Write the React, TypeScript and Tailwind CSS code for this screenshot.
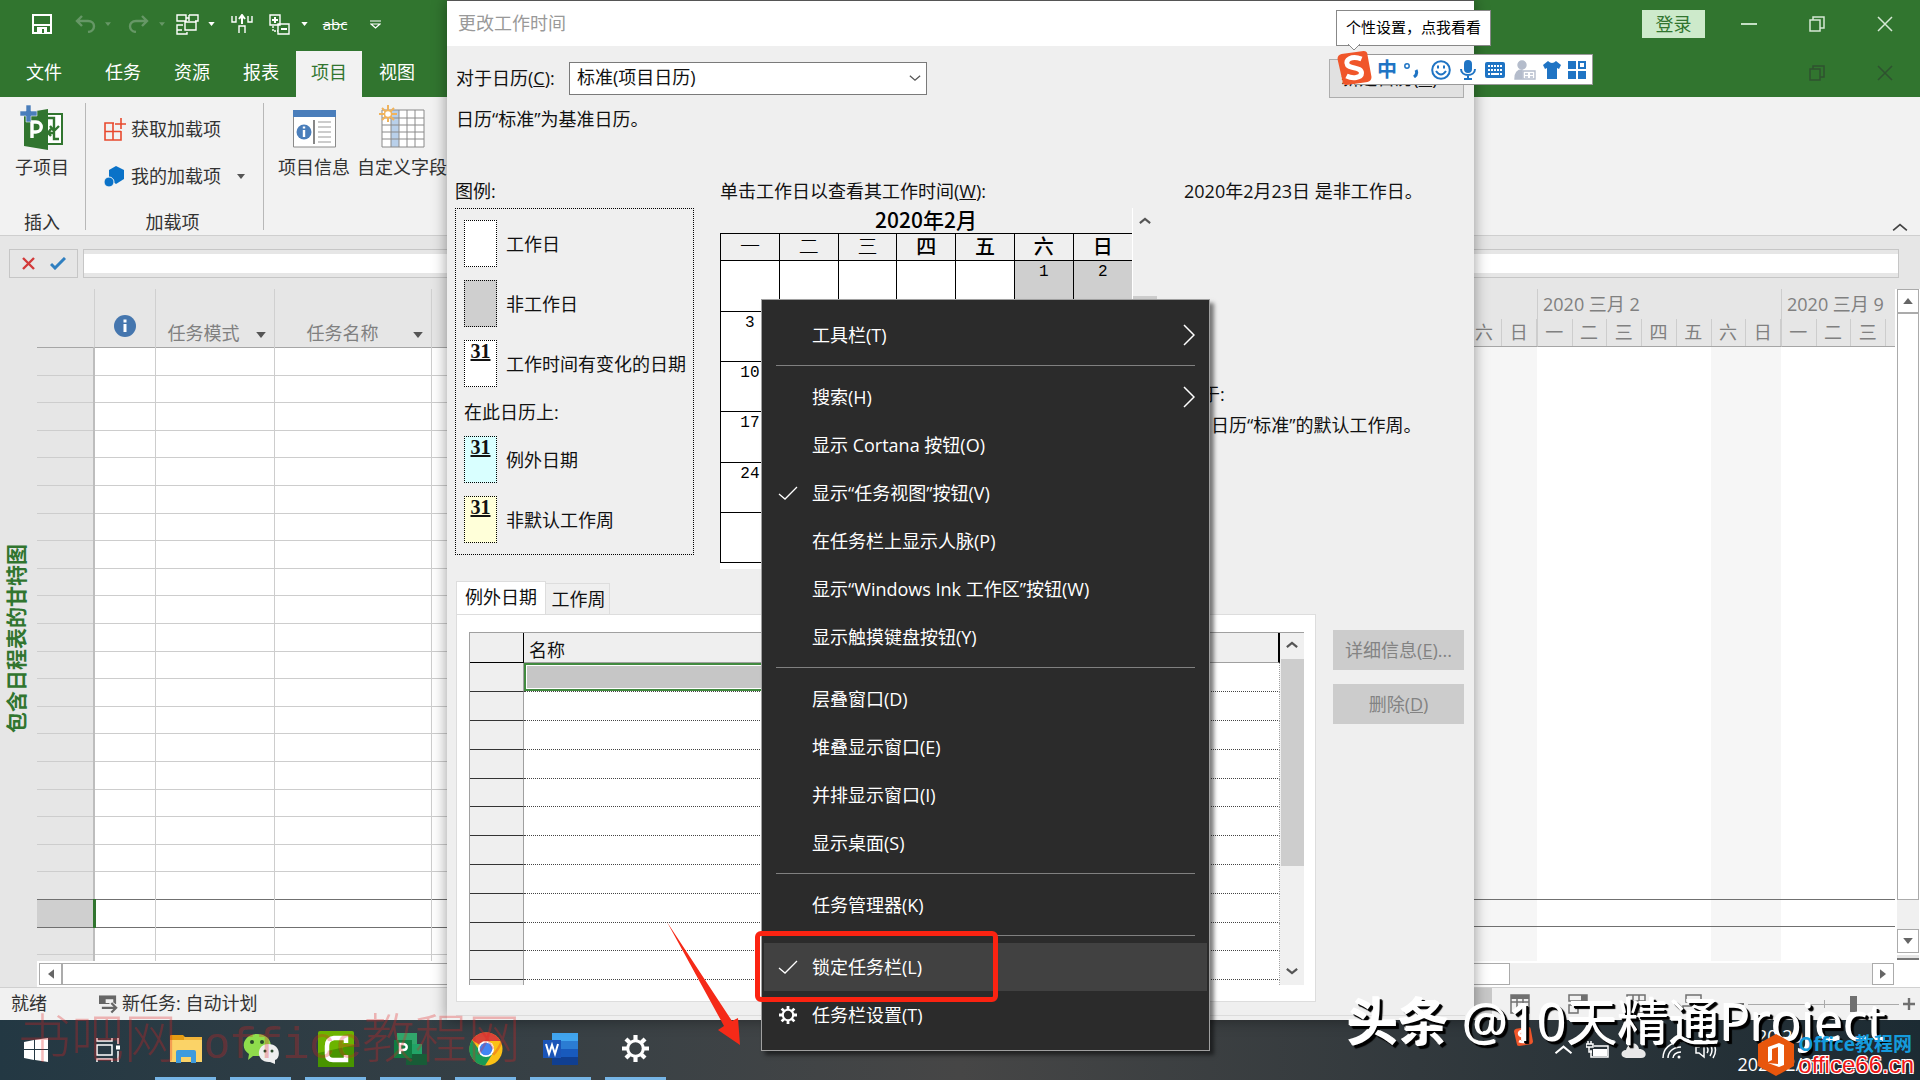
import React from 'react';
import type { ReactNode } from 'react';

const WEEK = ['一', '二', '三', '四', '五', '六', '日'];

const Caret = ({ className = '' }: { className?: string }) => (
  <svg viewBox="0 0 8 5" className={className}>
    <path d="M0 0h8L4 5z" fill="currentColor" />
  </svg>
);

const Chevron = ({ className = '', d = 'M1 7l6-5 6 5', w = 1.5 }: { className?: string; d?: string; w?: number }) => (
  <svg viewBox="0 0 14 9" className={className} fill="none" stroke="currentColor" strokeWidth={w}>
    <path d={d} />
  </svg>
);

/* ---------- Barra de título e abas ---------- */

const QuickAccess = () => (
  <div className="flex items-center pl-8 text-white">
    <button aria-label="保存">
      <svg viewBox="0 0 20 20" className="w-5 h-5" fill="none" stroke="#fff" strokeWidth="2">
        <path d="M1 1h18v18H1z" />
        <path d="M1 11h18" />
        <path d="M5 19v-6h10v6z" fill="#fff" stroke="none" />
        <path d="M10 15h2v4h-2z" fill="#31752f" stroke="none" />
      </svg>
    </button>
    <button aria-label="撤消" className="ml-[23px]">
      <svg viewBox="0 0 21 18" className="w-[21px] h-[18px]" fill="none" stroke="#669766" strokeWidth="2.4">
        <path d="M7 1L2 6l5 5M2 6h11c8 0 8 10 0 11" />
      </svg>
    </button>
    <Caret className="w-[6px] h-1 ml-[9px] text-[#669766]" />
    <button aria-label="恢复" className="ml-[17px]">
      <svg viewBox="0 0 21 18" className="w-[21px] h-[18px]" fill="none" stroke="#669766" strokeWidth="2.4">
        <path d="M14 1l5 5-5 5M19 6H8c-8 0-8 10 0 11" />
      </svg>
    </button>
    <Caret className="w-[6px] h-1 ml-[10px] text-[#669766]" />
    <button aria-label="网络图" className="ml-[11px]">
      <svg viewBox="0 0 23 21" className="w-[23px] h-[21px]" fill="none" stroke="#fff" strokeWidth="1.4">
        <path d="M1 1h9v6H1zM13 1h9v6h-3M13 1v6M9 8h11v8H9zM7 11H1v9h10v-2M1 16h5M10 4h3" />
      </svg>
    </button>
    <Caret className="w-[7px] h-1 ml-[9px]" />
    <button aria-label="上移" className="ml-[16px]">
      <svg viewBox="0 0 22 20" className="w-[22px] h-5" fill="none" stroke="#fff" strokeWidth="1.4">
        <path d="M1 2v6h4V2M17 2v6h4V2M8 19v-7h6v7" />
        <path d="M11 10V2M8 5l3-4 3 4" strokeWidth="2" />
      </svg>
    </button>
    <button aria-label="大纲" className="ml-[16px]">
      <svg viewBox="0 0 21 21" className="w-[21px] h-[21px]" fill="none" stroke="#fff" strokeWidth="1.4">
        <path d="M1 1h10v10H1zM9 10h11v10H9z" />
        <path d="M3 6h6M6 3v6M12 15h6" strokeWidth="2" />
        <path d="M4 12v5h5" strokeDasharray="2 1" />
      </svg>
    </button>
    <Caret className="w-[7px] h-1 ml-[11px]" />
    <button aria-label="删除线" className="ml-[14px] w-[26px] text-[15px] leading-5 line-through">abc</button>
    <svg viewBox="0 0 11 9" className="w-[11px] h-[9px] ml-[22px]" fill="none" stroke="#fff" strokeWidth="1.2">
      <path d="M0 1h11M1 4h9L5.500 8z" />
    </svg>
  </div>
);

const Restore = () => (
  <svg viewBox="0 0 16 16" className="w-4 h-4" fill="none" stroke="currentColor" strokeWidth="1.5">
    <path d="M1 4h10v11H1zM4 4V1h11v11h-4" />
  </svg>
);

const Close = () => (
  <svg viewBox="0 0 16 16" className="w-4 h-4" fill="none" stroke="currentColor" strokeWidth="1.5">
    <path d="M1 1l14 14M15 1L1 15" />
  </svg>
);

const TitleBar = () => (
  <header className="bg-[#31752f] text-white shrink-0">
    <div className="flex justify-between h-12">
      <QuickAccess />
      <div className="flex items-center">
        <button className="w-[63px] h-7 mr-[10px] bg-[#cdeacb] text-[#31752f] text-[18px] leading-7">登录</button>
        <button aria-label="最小化" className="w-[68px] flex justify-center">
          <span className="w-4 h-[2px] bg-[#c5e0c5]"></span>
        </button>
        <button aria-label="还原" className="w-[68px] flex justify-center text-[#d5e8d5]"><Restore /></button>
        <button aria-label="关闭" className="w-[68px] mr-px flex justify-center text-[#d5e8d5]"><Close /></button>
      </div>
    </div>
    <div className="flex justify-between h-[49px]">
      <nav className="flex items-end text-[18px]">
        <button className="w-[88px] h-[46px] pb-1">文件</button>
        <button className="w-[70px] h-[46px] pb-1">任务</button>
        <button className="w-[68px] h-[46px] pb-1">资源</button>
        <button className="w-[70px] h-[46px] pb-1">报表</button>
        <button className="w-[66px] h-[46px] pb-1 bg-[#f2f2f2] text-[#31752f]">项目</button>
        <button className="w-[70px] h-[46px] pb-1">视图</button>
      </nav>
      <div className="flex items-center text-[#2f5230]">
        <button aria-label="还原文档" className="w-[68px] flex justify-center"><Restore /></button>
        <button aria-label="关闭文档" className="w-[68px] mr-px flex justify-center"><Close /></button>
      </div>
    </div>
  </header>
);

/* ---------- Faixa de opções ---------- */

const Ribbon = () => (
  <div className="relative flex h-[139px] shrink-0 bg-[#f2f2f2] border-b border-[#cfcfcf] text-[18px] text-[#333]">
    <div className="flex flex-col items-center w-[85px] pt-2 pr-px">
      <button className="flex flex-col items-center">
        <svg viewBox="0 0 44 45" className="w-11 h-[45px]">
          <path d="M24 9h18v30H24z" fill="#fff" stroke="#31752f" strokeWidth="2" />
          <path d="M27 13h7v12M30 21l4 5 5-5M28 28h6v6h5M31 31l-3-3 3-4" fill="none" stroke="#31752f" strokeWidth="2.400" />
          <path d="M4 8l24-4v41L4 41z" fill="#31752f" />
          <path d="M12 33V17h4c7 0 7 10 0 10h-4" fill="none" stroke="#fff" strokeWidth="3.400" />
          <path d="M6 0h5v6h6v5h-6v6H6v-6H0V6h6z" fill="#4a7ebb" stroke="#f2f2f2" strokeWidth=".6" />
        </svg>
        <span className="leading-[34px]">子项目</span>
      </button>
      <span className="mt-auto leading-[26px]">插入</span>
    </div>
    <div className="w-px h-[127px] mt-[6px] bg-[#b8b8b8]"></div>
    <div className="flex flex-col w-[177px] pt-[9px]">
      <button className="flex items-center h-[47px] pl-[18px] gap-[5px]">
        <svg viewBox="0 0 22 23" className="w-[22px] h-[23px]" fill="none" stroke="#e8492e" strokeWidth="1.6">
          <path d="M10 5H1v17h16v-9M1 13.500h16M9 5v17M17 0v11M11 6h11" />
        </svg>
        获取加载项
      </button>
      <button className="flex items-center h-[47px] pl-[18px] gap-[5px]">
        <svg viewBox="0 0 22 22" className="w-[22px] h-[22px]" fill="#0a72c8">
          <path d="M12 0l8 4v9l-8 5-7-5V4z" />
          <circle cx="5" cy="16" r="5" stroke="#f2f2f2" />
        </svg>
        我的加载项
        <Caret className="w-2 h-[5px] ml-[11px] text-[#555]" />
      </button>
      <span className="mt-auto leading-[26px] text-center pr-1">加载项</span>
    </div>
    <div className="w-px h-[127px] mt-[6px] bg-[#b8b8b8]"></div>
    <div className="flex items-start pt-2 pl-[14px] gap-[7px]">
      <button className="flex flex-col items-center">
        <svg viewBox="0 0 43 45" className="w-[43px] h-[45px]">
          <path d="M.5 6h42v36H.5z" fill="#fff" stroke="#8a8a8a" />
          <path d="M0 5h43v7H0z" fill="#4a7ebb" />
          <circle cx="11" cy="27" r="7.500" fill="#4a7ebb" />
          <path d="M11 25v7M11 21.500v2" stroke="#fff" strokeWidth="2.400" />
          <path d="M21 15v24" stroke="#555" strokeWidth="1.400" />
          <path d="M25 17h13M25 22h13M25 27h13M25 32h13M25 37h13" stroke="#999" />
        </svg>
        <span className="leading-[34px]">项目信息</span>
      </button>
      <button className="flex flex-col items-center">
        <svg viewBox="0 0 46 45" className="w-[46px] h-[45px]">
          <path d="M3 5h42v37H3z" fill="#fff" />
          <path d="M12 5h8v37h-8z" fill="#b9d0ea" />
          <path d="M3 5h42v37H3zM3 13h42M3 20h42M3 27h42M3 34h42M12 5v37M20 5v37M28 5v37M36 5v37" fill="none" stroke="#8a8a8a" />
          <path d="M9 0v17M0 9h18M3 3l12 12M15 3L3 15" stroke="#f0b35c" strokeWidth="2" />
          <circle cx="9" cy="9" r="3.500" fill="#fff" stroke="#f0b35c" strokeWidth="1.500" />
        </svg>
        <span className="leading-[34px]">自定义字段</span>
      </button>
    </div>
    <button aria-label="折叠功能区" className="ml-auto self-end mb-[2px] mr-3 text-[#444]">
      <Chevron className="w-4 h-[11px]" />
    </button>
  </div>
);

const EntryBar = () => (
  <div className="flex h-[53px] shrink-0 pt-[13px] pl-[9px] pr-[21px] gap-[5px]">
    <div className="flex items-center w-[69px] h-[29px] border border-[#c6c6c6] pl-3 gap-[15px]">
      <button aria-label="取消">
        <svg viewBox="0 0 13 13" className="w-[13px] h-[13px]" stroke="#d23a3a" strokeWidth="2.400">
          <path d="M1 1l11 11M12 1L1 12" />
        </svg>
      </button>
      <button aria-label="输入">
        <svg viewBox="0 0 16 13" className="w-4 h-[13px]" fill="none" stroke="#2f7fc0" strokeWidth="3">
          <path d="M1 7l4 4L15 1" />
        </svg>
      </button>
    </div>
    <div className="flex flex-1 h-[29px] py-1 border border-[#c6c6c6]">
      <input aria-label="输入栏" className="flex-1 min-w-0 bg-white" />
    </div>
  </div>
);

/* ---------- Tabela de tarefas e gráfico ---------- */

const TaskTable = () => (
  <div className="flex-1 min-w-0 h-[672px] overflow-hidden">
    <table className="w-full table-fixed border-collapse text-[18px] text-[#808080]">
      <colgroup>
        <col className="w-[57px]" />
        <col className="w-[61px]" />
        <col className="w-[119px]" />
        <col className="w-[157px]" />
        <col />
      </colgroup>
      <thead>
        <tr className="h-[58px] border-b border-[#a6a6a6]">
          <th className="border-r border-[#d0d0d0]"></th>
          <th className="border-r border-[#d0d0d0]">
            <svg viewBox="0 0 22 22" className="w-[22px] h-[22px] mx-auto mt-4" aria-label="标记">
              <circle cx="11" cy="11" r="11" fill="#4576ae" />
              <path d="M11 9v8M11 4.500v3" stroke="#fff" strokeWidth="3" />
            </svg>
          </th>
          <th className="border-r border-[#d0d0d0] font-normal align-bottom">
            <div className="flex items-center justify-between pl-3 pr-2 leading-7">任务模式<Caret className="w-[10px] h-[6px] mt-1 text-[#555]" /></div>
          </th>
          <th className="border-r border-[#d0d0d0] font-normal align-bottom">
            <div className="flex items-center justify-between pl-8 pr-2 leading-7">任务名称<Caret className="w-[10px] h-[6px] mt-1 text-[#555]" /></div>
          </th>
          <th></th>
        </tr>
      </thead>
      <tbody>
        {Array.from({ length: 23 }, (_, i) => (
          <tr
            key={i}
            className={`border-b ${i % 5 === 1 || i % 5 === 3 ? 'h-[27px]' : 'h-[28px]'} ${i === 19 || i === 20 ? 'border-[#707070]' : 'border-[#cdcdcd]'}`}
          >
            <td className={i === 20 ? 'bg-[#cfcfcf] border-r-3 border-[#31752f]' : 'bg-[#e6e6e6] border-r-2 border-[#bdbdbd]'}></td>
            <td className="bg-white border-r border-r-[#cdcdcd]"></td>
            <td className="bg-white border-r border-r-[#cdcdcd]"></td>
            <td className="bg-white border-r border-r-[#cdcdcd]"></td>
            <td className="bg-white"></td>
          </tr>
        ))}
      </tbody>
    </table>
  </div>
);

const WEEKS = [
  { label: '2020 二月 24', days: WEEK },
  { label: '2020 三月 2', days: WEEK },
  { label: '2020 三月 9', days: WEEK.slice(0, 3) },
];

const Gantt = () => (
  <div className="w-[602px] shrink-0 h-[672px] overflow-hidden text-[18px] text-[#808080]">
    <div className="flex h-full">
      {WEEKS.map((week) => (
        <div key={week.label} className="w-[244px] shrink-0 flex flex-col">
          <div className="h-[58px] border-b border-[#a6a6a6] border-l border-l-[#cdcdcd]">
            <div className="h-[30px] leading-[30px] pl-[5px]">{week.label}</div>
            <div className="grid grid-cols-7 h-[27px]">
              {week.days.map((d) => (
                <span key={d} className="text-center leading-[26px] pr-px border-r border-[#cdcdcd]">{d}</span>
              ))}
            </div>
          </div>
          <div className="grid grid-cols-7 flex-1 bg-white">
            <div className="col-start-6 col-span-2 bg-[#f6f6f6]"></div>
          </div>
        </div>
      ))}
    </div>
    {/* linha selecionada */}
    <div className="relative -top-[62px] h-7 border-y border-[#707070]"></div>
  </div>
);

const VerticalScroll = () => (
  <div className="flex flex-col w-[25px] shrink-0 pl-[2px] pr-px bg-white text-[#666]">
    <button aria-label="向上" className="flex items-center justify-center h-6 border border-[#ababab]"><Caret className="w-[10px] h-[6px] rotate-180" /></button>
    <div className="h-[587px] border border-[#ababab]"></div>
    <div className="h-[29px] bg-[#f0f0f0]"></div>
    <button aria-label="向下" className="flex items-center justify-center h-6 border border-[#ababab]"><Caret className="w-[10px] h-[6px]" /></button>
    <div className="h-[5px] mt-[2px] bg-[#e6e6e6] border-b-2 border-[#777]"></div>
  </div>
);

const Workspace = () => (
  <div className="flex flex-1 min-h-0">
    <div className="flex items-center justify-center w-[31px] mr-[6px] shrink-0">
      <span className="[writing-mode:vertical-rl] [text-orientation:sideways] rotate-180 text-[21px] leading-7 font-bold text-[#31752f] whitespace-nowrap">包含日程表的甘特图</span>
    </div>
    <div className="flex flex-col flex-1 min-w-0">
      <div className="flex flex-1">
        <TaskTable />
        <Gantt />
        <VerticalScroll />
      </div>
      <div className="flex h-[26px] shrink-0 pt-[2px] pb-[2px] pl-[2px] pr-[26px] bg-white text-[#666]">
        <button aria-label="向左" className="flex items-center justify-center w-[23px] border border-[#ababab]"><Caret className="w-[10px] h-[6px] rotate-90" /></button>
        <div className="flex-1 border border-[#ababab]"></div>
        <div className="w-[362px] bg-[#f0f0f0]"></div>
        <button aria-label="向右" className="flex items-center justify-center w-[22px] border border-[#ababab]"><Caret className="w-[10px] h-[6px] -rotate-90" /></button>
      </div>
    </div>
  </div>
);

const StatusBar = () => (
  <footer className="flex items-center h-[33px] shrink-0 bg-[#f1f1f1] border-t border-[#d0d0d0] text-[18px] leading-7 text-[#333]">
    <span className="pl-[11px] pb-[2px]">就绪</span>
    <svg viewBox="0 0 20 20" className="w-[19px] h-5 ml-[52px] mr-1" fill="none">
      <path d="M0 1h18v9H0z" fill="#666" />
      <path d="M7 7h6v7h5M14 10l5 4-5 5M3 14h6" stroke="#f1f1f1" strokeWidth="4" />
      <path d="M3 14h14M13 9l5 5-5 5" stroke="#666" strokeWidth="2.400" />
    </svg>
    <span className="pb-[2px]">新任务: 自动计划</span>
    <div className="flex items-center ml-auto h-full pr-[5px] text-[#707070]">
      <button aria-label="甘特图" className="w-[22px] h-full mr-[18px] bg-[#c8c8c8]"></button>
      <svg viewBox="0 0 20 20" className="w-5 h-5 mr-[38px]" fill="none" stroke="currentColor" strokeWidth="1.500">
        <path d="M1 1h18v18H1zM1 8h18M7 5v14M13 5v14" /><path d="M1 3h18" strokeWidth="4" />
      </svg>
      <svg viewBox="0 0 20 20" className="w-5 h-5 mr-[38px]" fill="none" stroke="currentColor" strokeWidth="1.500">
        <path d="M1 1h18v6H1zM1 11h9v8H1z" /><path d="M13 4h6" strokeWidth="6" />
      </svg>
      <svg viewBox="0 0 20 20" className="w-5 h-5 mr-[36px]" fill="none" stroke="currentColor" strokeWidth="1.500">
        <path d="M1 1h18v18H1zM1 7h18M1 13h18M7 1v18M13 1v18" />
      </svg>
      <svg viewBox="0 0 20 20" className="w-5 h-5 mr-[26px]" fill="none" stroke="currentColor" strokeWidth="1.500">
        <path d="M4 1h15v7H4zM1 12h14v7H1z" />
      </svg>
      <span className="w-4 h-[2px] bg-current"></span>
      <div className="flex items-center w-[151px] mx-1">
        <span className="flex-1 h-px bg-[#aaa]"></span>
        <span className="w-px h-2 bg-[#aaa]"></span>
        <span className="w-[25px] h-px bg-[#aaa]"></span>
        <span className="w-[7px] h-4 bg-[#707070]"></span>
        <span className="w-[42px] h-px bg-[#aaa]"></span>
      </div>
      <svg viewBox="0 0 12 12" className="w-3 h-3" stroke="currentColor" strokeWidth="2.400">
        <path d="M0 6h12M6 0v12" />
      </svg>
    </div>
  </footer>
);

/* ---------- Diálogo de calendário ---------- */

const Swatch = ({ color, day, label }: { color: string; day?: boolean; label: string }) => (
  <div className="flex items-center h-[47px] gap-[9px]">
    <span className={`w-[33px] h-full border border-dotted border-black text-center text-[20px] leading-[21px] font-bold underline font-['Liberation_Serif',serif] ${color}`}>
      {day ? '31' : ''}
    </span>
    <span className="pt-[2px]">{label}</span>
  </div>
);

const Legend = () => (
  <div className="w-[239px]">
    <div className="h-[34px] leading-[34px]">图例:</div>
    <div className="flex flex-col h-[347px] pt-[11px] pl-2 border border-dotted border-black whitespace-nowrap">
      <Swatch color="bg-white" label="工作日" />
      <div className="h-[13px]"></div>
      <Swatch color="bg-[#cfcfcf]" label="非工作日" />
      <div className="h-[13px]"></div>
      <Swatch color="bg-white" day label="工作时间有变化的日期" />
      <div className="h-[49px] leading-[51px]">在此日历上:</div>
      <Swatch color="bg-[#d9ffff]" day label="例外日期" />
      <div className="h-[13px]"></div>
      <Swatch color="bg-[#ffffd9]" day label="非默认工作周" />
    </div>
  </div>
);

const Calendar = () => (
  <div className="ml-[26px]">
    <div className="h-[34px] leading-[34px]">单击工作日以查看其工作时间(<u>W</u>):</div>
    <div className="flex">
      <div className="w-[413px] border-r border-white">
        <table className="w-[412px] table-fixed border-collapse text-black">
          <caption className="h-[25px] text-[21px] leading-[22px] font-medium font-['Noto_Sans_CJK_SC',sans-serif]">2020年2月</caption>
          <thead>
            <tr className="h-[27px] border-y border-black">
              {WEEK.map((d, i) => (
                <th key={d} className={`border-l border-black text-[20px] leading-6 ${i < 3 ? 'font-light' : 'font-medium'}`}>{d}</th>
              ))}
            </tr>
          </thead>
          <tbody>
            {Array.from({ length: 6 }, (_, row) => (
              <tr key={row} className={`border-b border-black ${row % 3 === 0 ? 'h-[51px]' : 'h-[50px]'}`}>
                {WEEK.map((d, col) => {
                  const n = row * 7 + col - 4;
                  return (
                    <td
                      key={d}
                      className={`border-l border-black align-top text-center text-[16px] leading-[22px] font-['Liberation_Mono',monospace] ${col > 4 && n <= 29 ? 'bg-[#cfcfcf]' : 'bg-white'}`}
                    >
                      {n > 0 && n <= 29 ? n : ''}
                    </td>
                  );
                })}
              </tr>
            ))}
          </tbody>
        </table>
        <div className="h-[6px] bg-white"></div>
      </div>
      <div className="w-6 pt-[9px] text-[#555]">
        <Chevron className="w-3 h-2 mx-auto" w={2.4} />
        <div className="h-[71px]"></div>
        <div className="h-[180px] bg-[#cdcdcd]"></div>
      </div>
    </div>
  </div>
);

const ExceptionPane = () => (
  <div className="flex-1 flex flex-col">
    <div className="flex items-end h-[33px]">
      <button className="w-[90px] h-[33px] bg-white border border-b-0 border-[#ddd] pb-[2px]">例外日期</button>
      <button className="w-[64px] h-[31px] border border-l-0 border-b-0 border-[#ddd] pl-[2px]">工作周</button>
    </div>
    <div className="flex h-[388px] pt-[17px] pl-3 pr-[11px] bg-white border border-[#ddd]">
      <div className="flex-1 h-[353px] overflow-hidden border-t border-l border-[#a0a0a0]">
        <table className="w-full table-fixed border-separate border-spacing-0">
          <colgroup>
            <col className="w-[54px]" />
            <col />
          </colgroup>
          <thead>
            <tr className="h-[30px] bg-[#efefef]">
              <th className="border-r border-b border-black"></th>
              <th className="border-r-2 border-b border-r-black border-b-[#a0a0a0] text-left pl-[5px] pt-1 font-normal leading-6">名称</th>
            </tr>
          </thead>
          <tbody>
            {Array.from({ length: 12 }, (_, i) => (
              <tr key={i} className={i % 5 === 4 ? 'h-[28px]' : 'h-[29px]'}>
                <td className="bg-[#efefef] border-b border-b-[#333] border-r border-r-[#a0a0a0]"></td>
                <td className="p-0 border-b border-dotted border-b-[#444] border-r border-r-[#a0a0a0]">
                  {i === 0 && <div className="h-[28px] w-[480px] bg-[#c6c6c6] border-2 border-[#418a3f] outline-1 -outline-offset-3 outline-white"></div>}
                </td>
              </tr>
            ))}
          </tbody>
        </table>
      </div>
      <div className="flex flex-col items-center w-6 h-[353px] bg-[#f0f0f0] border-t border-[#a0a0a0] text-[#555]">
        <Chevron className="w-3 h-2 mt-2 mb-[10px]" w={2.6} />
        <div className="w-[23px] h-[207px] bg-[#cdcdcd]"></div>
        <Chevron className="w-3 h-2 mt-auto mb-[10px] rotate-180" w={2.6} />
      </div>
    </div>
  </div>
);

const CalendarDialog = () => (
  <section className="absolute left-[447px] top-0 w-[1027px] h-[1020px] flex flex-col bg-[#efefef] border-t border-[#555] text-[18px] text-[#111] shadow-[0_0_14px_rgba(0,0,0,0.4)]">
    <h1 className="h-[45px] leading-[44px] pl-[11px] bg-white text-[#999]">更改工作时间</h1>
    <div className="flex items-center h-[39px] mt-[13px] pl-[9px] pr-[10px]">
      <label htmlFor="cal" className="w-[113px]">对于日历(<u>C</u>):</label>
      <div className="relative">
        <select id="cal" className="appearance-none w-[358px] h-[33px] px-[7px] pb-[2px] bg-white border border-[#7a7a7a]">
          <option>标准(项目日历)</option>
        </select>
        <Chevron className="absolute right-[6px] top-3 w-3 h-2 rotate-180 text-[#555]" />
      </div>
      <button className="ml-auto w-[135px] h-[39px] bg-[#e1e1e1] border border-[#adadad]">新建日历(<u>N</u>)...</button>
    </div>
    <p className="h-[42px] leading-[42px] pl-[9px]">日历“标准”为基准日历。</p>
    <div className="flex mt-[34px] pl-[8px]">
      <Legend />
      <Calendar />
      <div className="ml-[27px]">
        <p className="leading-[34px]">2020年2月23日 是非工作日。</p>
        <p className="mt-[171px] leading-[31px]">基于:</p>
        <p className="pl-[27px] leading-[31px]">日历“标准”的默认工作周。</p>
      </div>
    </div>
    <div className="flex mt-3 pl-[9px] pr-[10px] gap-[17px]">
      <ExceptionPane />
      <div className="flex flex-col gap-[14px] mt-[49px]">
        <button disabled className="w-[131px] h-10 bg-[#cccccc] text-[#838383]">详细信息(<u>E</u>)...</button>
        <button disabled className="w-[131px] h-10 bg-[#cccccc] text-[#838383]">删除(<u>D</u>)</button>
      </div>
    </div>
    <div className="mt-[13px] mx-[9px] h-px bg-[#dcdcdc]"></div>
  </section>
);

/* ---------- Menu da barra de tarefas ---------- */

const Gear = ({ className = '' }: { className?: string }) => (
  <svg viewBox="0 0 26 26" className={className} fill="none" stroke="#fff">
    <circle cx="13" cy="13" r="7.500" strokeWidth="3" />
    <path d="M13 0v5M13 21v5M0 13h5M21 13h5M3.800 3.800l3.500 3.500M18.700 18.700l3.500 3.500M22.200 3.800l-3.500 3.500M7.300 18.700l-3.500 3.500" strokeWidth="4" />
  </svg>
);

const Item = ({ icon, arrow, active, children }: { icon?: 'check' | 'gear'; arrow?: boolean; active?: boolean; children: ReactNode }) => (
  <button role="menuitem" className={`flex items-center h-12 mx-[2px] pl-[14px] pr-3 text-left ${active ? 'bg-[#414141]' : ''}`}>
    <span className="w-[34px]">
      {icon === 'check' && (
        <svg viewBox="0 0 20 14" className="w-5 h-[14px]" fill="none" stroke="#fff" strokeWidth="1.300">
          <path d="M1 8l6 5L19 1" />
        </svg>
      )}
      {icon === 'gear' && <Gear className="w-[18px] h-[18px] ml-px" />}
    </span>
    {children}
    {arrow && (
      <svg viewBox="0 0 12 22" className="w-3 h-[22px] ml-auto" fill="none" stroke="#fff" strokeWidth="1.500">
        <path d="M1 1l10 10L1 21" />
      </svg>
    )}
  </button>
);

const Sep = () => (
  <div className="flex h-[14px] pt-[6px] px-[14px]">
    <span className="flex-1 h-px bg-[#808080]"></span>
  </div>
);

const TaskbarMenu = () => (
  <div role="menu" className="absolute left-[761px] top-[299px] w-[449px] h-[752px] flex flex-col pt-[11px] bg-[#2b2b2b] border border-[#a0a0a0] text-white text-[18px] shadow-[4px_4px_4px_rgba(0,0,0,0.5)]">
    <Item arrow>工具栏(T)</Item>
    <Sep />
    <Item arrow>搜索(H)</Item>
    <Item>显示 Cortana 按钮(O)</Item>
    <Item icon="check">显示“任务视图”按钮(V)</Item>
    <Item>在任务栏上显示人脉(P)</Item>
    <Item>显示“Windows Ink 工作区”按钮(W)</Item>
    <Item>显示触摸键盘按钮(Y)</Item>
    <Sep />
    <Item>层叠窗口(D)</Item>
    <Item>堆叠显示窗口(E)</Item>
    <Item>并排显示窗口(I)</Item>
    <Item>显示桌面(S)</Item>
    <Sep />
    <Item>任务管理器(K)</Item>
    <Sep />
    <Item icon="check" active>锁定任务栏(L)</Item>
    <Item icon="gear">任务栏设置(T)</Item>
  </div>
);

/* ---------- Barra do método de entrada ---------- */

const SogouLogo = ({ className = '' }: { className?: string }) => (
  <svg viewBox="0 0 34 34" className={className}>
    <path d="M4 3L26 0q4 0 4 4l4 22q0 4-4 5L9 34q-4 0-4-4L0 8q0-4 4-5z" fill="#f0562a" />
    <path d="M24 8C14 4 7 9 10 14c3 4 14 2 14 8 0 5-9 6-15 3" fill="none" stroke="#fff" strokeWidth="5" />
  </svg>
);

const InputMethod = () => (
  <>
    <div className="absolute left-[1336px] top-[10px] w-[155px] h-9 pl-[9px] leading-8 bg-white border border-[#888] text-[15px] text-black whitespace-nowrap">
      个性设置，点我看看
      <svg viewBox="0 0 12 7" className="absolute left-[11px] top-[33px] w-3 h-[7px]">
        <path d="M0 0l6 6 6-6" fill="#fff" stroke="#888" />
      </svg>
    </div>
    <div className="absolute left-[1354px] top-[54px] w-[239px] h-[31px] flex items-center pl-[22px] gap-[7px] bg-white border border-[#999] text-[#1f74c4]">
      <span className="w-5 text-[20px] leading-6 font-bold">中</span>
      <svg viewBox="0 0 15 16" className="w-[15px] h-4 mr-[5px]" fill="none" stroke="currentColor">
        <circle cx="3" cy="4" r="2.200" strokeWidth="1.500" />
        <path d="M12 8q2 4-2 7" strokeWidth="3" />
      </svg>
      <svg viewBox="0 0 20 20" className="w-5 h-5" fill="none" stroke="currentColor" strokeWidth="2">
        <circle cx="10" cy="10" r="8.800" /><path d="M5 11q5 7 10 0M7 5.500v3M13 5.500v3" />
      </svg>
      <svg viewBox="0 0 20 20" className="w-5 h-5" fill="none" stroke="currentColor" strokeWidth="2">
        <rect x="7" y="1" width="6" height="11" rx="3" fill="currentColor" /><path d="M3 9c0 8 14 8 14 0M10 15v4M6 19h8" />
      </svg>
      <svg viewBox="0 0 20 16" className="w-5 h-4">
        <rect width="20" height="16" rx="2" fill="currentColor" />
        <path d="M3 4h14M3 8h14" stroke="#fff" strokeWidth="2" strokeDasharray="2 1" /><path d="M3 12h2M6 12h8M15 12h2" stroke="#fff" strokeWidth="2" />
      </svg>
      <svg viewBox="0 0 22 20" className="w-[22px] h-5 ml-[2px]" fill="none" stroke="#b4bccb" strokeWidth="1.400">
        <circle cx="8" cy="5" r="4" fill="#b4bccb" /><path d="M1 19q0-9 7-9v9z" fill="#b4bccb" /><path d="M9 11h12v8H9zM11 14h3M16 14h3M11 17h3M16 17h3" fill="#fff" />
      </svg>
      <svg viewBox="0 0 18 18" className="w-[18px] h-[18px]" fill="currentColor">
        <path d="M5 0q4 4 8 0l5 4-2 4-2-1v11H4V7L2 8 0 4z" />
      </svg>
      <svg viewBox="0 0 18 18" className="w-[18px] h-[18px]" fill="currentColor">
        <path d="M0 0h8v8H0zM0 10h8v8H0zM10 10h8v8h-8z" /><path d="M11 1h6v6h-6z" fill="none" stroke="currentColor" strokeWidth="2" />
      </svg>
    </div>
    <SogouLogo className="absolute left-[1337px] top-[51px] w-[35px] h-[34px]" />
  </>
);

/* ---------- Barra de tarefas ---------- */

const apps: { name: string; icon: ReactNode }[] = [
  {
    name: '文件资源管理器',
    icon: (
      <svg viewBox="0 0 34 30" className="w-[34px] h-[30px]">
        <path d="M1 5V2q0-1 1-1h12l3 3v3H1z" fill="#e59c13" />
        <path d="M15 3h18v6H15z" fill="#f2b53a" />
        <path d="M1 6h32v22H1z" fill="#fbd367" />
        <path d="M7 29V18q0-2 2-2h16q2 0 2 2v11h-5v-6H12v6z" fill="#3e9bdd" />
      </svg>
    ),
  },
  {
    name: '微信',
    icon: (
      <svg viewBox="0 0 36 30" className="w-9 h-[30px]">
        <path d="M14 0c18 0 18 22 2 22l-6 0-5 4 1-6C-4 14 1 0 14 0z" fill="#8fdc4c" />
        <path d="M25 10c13 0 13 14 7 16v4l-5-2c-15 1-14-18-2-18z" fill="#eee" />
        <g fill="#2b4a2b"><circle cx="9" cy="8" r="2" /><circle cx="19" cy="8" r="2" /><circle cx="22" cy="17" r="1.500" /><circle cx="29" cy="17" r="1.500" /></g>
      </svg>
    ),
  },
  {
    name: 'Camtasia',
    icon: (
      <svg viewBox="0 0 36 36" className="w-9 h-9">
        <rect width="36" height="36" rx="2" fill="#6cb400" />
        <path d="M0 22L36 14V36H0z" fill="#489400" />
        <path d="M28 12V7H16Q9 8 9 15v8q0 6 6 6h13v-5" fill="none" stroke="#fff" strokeWidth="4.500" />
      </svg>
    ),
  },
  {
    name: 'Project',
    icon: (
      <svg viewBox="0 0 34 34" className="w-[34px] h-[34px]">
        <path d="M3 1h20v12H3z" fill="#31a66b" /><path d="M18 12h10v11H18z" fill="#21a366" /><path d="M12 22h21v11H12z" fill="#185c37" />
        <path d="M0 8h18v18H0z" fill="#107c41" />
        <path d="M6 22V12h3c5 0 5 6 0 6H6" fill="none" stroke="#fff" strokeWidth="2.400" />
      </svg>
    ),
  },
  {
    name: 'Chrome',
    icon: (
      <svg viewBox="0 0 34 34" className="w-[34px] h-[34px]">
        <circle cx="17" cy="17" r="16.500" fill="#fbc116" />
        <path d="M17 17L3 8A16.500 16.500 0 0 1 31.500 9H17z" fill="#dc4437" />
        <path d="M3 8A16.500 16.500 0 0 0 16 33.500l8-12.500-7-4-6 2z" fill="#1a9a55" />
        <circle cx="17" cy="17" r="8" fill="#fff" /><circle cx="17" cy="17" r="6.300" fill="#4285f4" />
      </svg>
    ),
  },
  {
    name: 'Word',
    icon: (
      <svg viewBox="0 0 36 34" className="w-9 h-[34px]">
        <path d="M9 1h26v8H9z" fill="#41a5ee" /><path d="M9 9h26v8H9z" fill="#2b7cd3" /><path d="M9 17h26v8H9z" fill="#185abd" /><path d="M9 25h26v8H9z" fill="#103f91" />
        <path d="M0 8h18v18H0z" fill="#1b55b8" />
        <path d="M3 12l3 10 3-9 3 9 3-10" fill="none" stroke="#fff" strokeWidth="2" />
      </svg>
    ),
  },
  { name: '设置', icon: <Gear className="w-[27px] h-[27px]" /> },
];

const Taskbar = () => (
  <div className="flex h-[60px] shrink-0 bg-linear-to-r from-[#233843] via-[#464646] to-[#1c2b33] text-white">
    <button aria-label="开始" className="w-[72px] flex items-center justify-center">
      <svg viewBox="0 0 24 24" className="w-6 h-6" fill="#fff">
        <path d="M0 4l10-2v9H0zM11 1.800L24 0v11H11zM0 12h10v10L0 20zM11 12h13v12l-13-2z" />
      </svg>
    </button>
    <button aria-label="任务视图" className="w-[72px] flex items-center justify-center">
      <svg viewBox="0 0 24 24" className="w-6 h-6" fill="none" stroke="#fff" strokeWidth="1.500">
        <path d="M1 0v3h15V0M1 7h15v10H1zM1 24v-3h15v3M22 0v6M22 13v11" /><path d="M20 9.500h4" strokeWidth="4" />
      </svg>
    </button>
    <div className="flex pl-[11px] gap-[14px]">
      {apps.map((a) => (
        <button key={a.name} aria-label={a.name} className="w-[61px] h-full flex items-center justify-center border-b-3 border-[#76b5e6]">{a.icon}</button>
      ))}
    </div>
    <div className="ml-auto flex items-center pr-3">
      <SogouLogo className="w-[19px] h-[19px] mb-7 mr-[21px]" />
      <Chevron className="w-[19px] h-3 mr-[13px]" />
      <svg viewBox="0 0 24 18" className="w-6 h-[18px] mr-[11px]" fill="none" stroke="#fff" strokeWidth="1.500">
        <path d="M8 5h14v11H5V9" /><path d="M7 8h14v7H7z" fill="#fff" stroke="none" /><path d="M2 0v3M5 0v3M0 3h7v3H0zM3 6v5h3" />
      </svg>
      <svg viewBox="0 0 25 15" className="w-[25px] h-[15px] mr-4" fill="#e8e8e8">
        <path d="M5 15C-2 14 0 7 5 7 8-2 17-1 18 6c8 0 9 9 2 9z" />
      </svg>
      <svg viewBox="0 0 20 18" className="w-5 h-[18px] mr-[13px]" fill="none" stroke="#fff" strokeWidth="1.500">
        <path d="M1 17C1 8 8 1 19 1M6 17c0-6 5-11 13-11M11 17c0-3 3-6 8-6" /><circle cx="17" cy="16" r="1.500" fill="#fff" stroke="none" />
      </svg>
      <svg viewBox="0 0 22 18" className="w-[22px] h-[18px] mr-[19px]" fill="none" stroke="#fff" strokeWidth="1.500">
        <path d="M1 6h3l5-4v14l-5-4H1zM12 6q2 3 0 6M15 3q4 6 0 12M18 1q5 8 0 16" />
      </svg>
      <div className="w-[88px] mr-[84px] text-[18px] leading-7 text-center whitespace-nowrap">
        <div>20:29</div>
        <div>2020/2/23</div>
      </div>
    </div>
  </div>
);

/* ---------- Anotações e marcas d'água ---------- */

const Annotations = () => (
  <div className="pointer-events-none">
    <div className="absolute left-[755px] top-[931px] w-[243px] h-[71px] border-5 border-[#fb2311] rounded-[6px]"></div>
    <svg viewBox="0 0 76 124" className="absolute left-[666px] top-[921px] w-[76px] h-[124px]" fill="#f52a18">
      <path d="M1 1L66 100l6-3 2 27-22-15 6-4z" />
    </svg>
    <p className="absolute left-[18px] top-[1006px] text-[53px] leading-[64px] font-light whitespace-nowrap text-[#e02020]/30">
      书吧网<span className="font-['Liberation_Mono',monospace] text-[44px]"> office</span>教程网
    </p>
    <p className="absolute right-[34px] bottom-[24px] text-[51px] leading-[70px] whitespace-nowrap text-white [text-shadow:3px_3px_1px_#000,2px_2px_0_#111,-1px_-1px_0_#fff]">
      <b>头条</b> @10天精通Project
    </p>
    <div className="absolute right-[6px] bottom-[4px] flex items-center">
      <svg viewBox="0 0 36 42" className="w-9 h-[42px]">
        <path d="M18 0l18 10v22L18 42 0 32V10z" fill="#e8560c" />
        <path d="M10 13l11-4 5 2v20l-5 2-11-4 10 1V13l-6 2v11l-4 2z" fill="#fff" />
      </svg>
      <div className="pl-1">
        <div className="text-[19px] leading-5 font-bold text-[#159bdc]">Office教程网</div>
        <div className="text-[24px] leading-[22px] text-[#f01818] font-['Liberation_Sans',sans-serif] [text-shadow:1px_1px_0_#fff,-1px_-1px_0_#fff,1px_-1px_0_#fff,-1px_1px_0_#fff]">office66.cn</div>
      </div>
    </div>
  </div>
);

export default function App() {
  return (
    <div className="relative flex flex-col h-screen overflow-hidden bg-[#e6e6e6] font-['Open_Sans','Noto_Sans_CJK_SC',sans-serif]">
      <TitleBar />
      <Ribbon />
      <EntryBar />
      <Workspace />
      <StatusBar />
      <Taskbar />
      <CalendarDialog />
      <TaskbarMenu />
      <InputMethod />
      <Annotations />
    </div>
  );
}
